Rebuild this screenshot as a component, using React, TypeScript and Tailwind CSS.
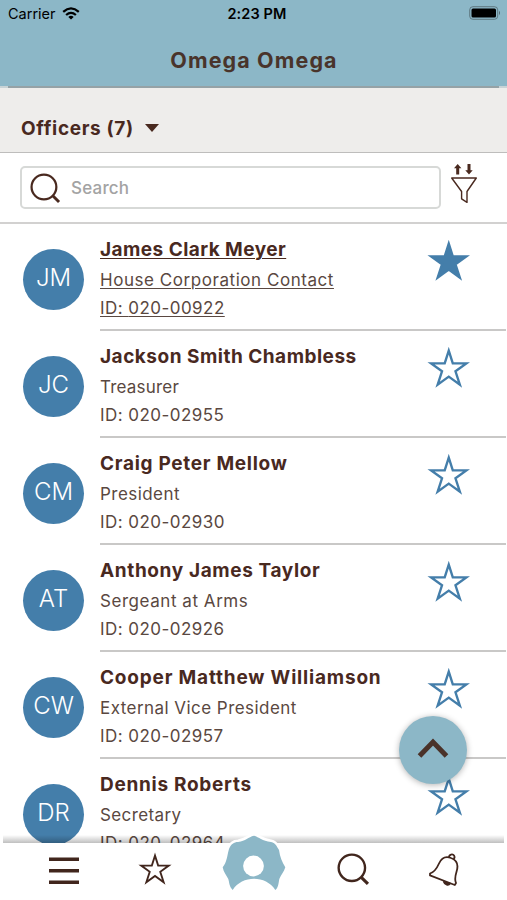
import clsx from 'clsx'

interface Officer {
  initials: string
  name: string
  role: string
  id: string
  starred?: boolean
  nameTracking: string
  roleTracking: string
}

const officers: Officer[] = [
  {
    initials: 'JM',
    name: 'James Clark Meyer',
    role: 'House Corporation Contact',
    id: '020-00922',
    starred: true,
    nameTracking: 'tracking-[0.45px]',
    roleTracking: 'tracking-[0.55px]',
  },
  {
    initials: 'JC',
    name: 'Jackson Smith Chambless',
    role: 'Treasurer',
    id: '020-02955',
    nameTracking: 'tracking-[0.5px]',
    roleTracking: 'tracking-[0.2px]',
  },
  {
    initials: 'CM',
    name: 'Craig Peter Mellow',
    role: 'President',
    id: '020-02930',
    nameTracking: 'tracking-[0.7px]',
    roleTracking: 'tracking-[0.45px]',
  },
  {
    initials: 'AT',
    name: 'Anthony James Taylor',
    role: 'Sergeant at Arms',
    id: '020-02926',
    nameTracking: 'tracking-[0.62px]',
    roleTracking: 'tracking-[0.55px]',
  },
  {
    initials: 'CW',
    name: 'Cooper Matthew Williamson',
    role: 'External Vice President',
    id: '020-02957',
    nameTracking: 'tracking-[0.81px]',
    roleTracking: 'tracking-[0.45px]',
  },
  {
    initials: 'DR',
    name: 'Dennis Roberts',
    role: 'Secretary',
    id: '020-02964',
    nameTracking: 'tracking-[0.72px]',
    roleTracking: 'tracking-[0.4px]',
  },
]

function Star({ filled, className }: { filled?: boolean; className?: string }) {
  return (
    <svg viewBox="0 0 42 42" className={className} fill={filled ? 'currentColor' : 'none'} stroke="currentColor">
      <path
        d="M21 4.5 L24.9 16.8 H38 L27.5 24.4 L31.7 37.4 L21 29.6 L10.3 37.4 L14.5 24.4 L4 16.8 H17.1 Z"
        strokeWidth="2.3"
      />
    </svg>
  )
}

function SearchIcon({ className }: { className?: string }) {
  return (
    <svg viewBox="0 0 32 32" className={className} fill="none" stroke="currentColor">
      <circle cx="14.4" cy="14.4" r="12.8" strokeWidth="2.3" />
      <path d="M23.8 23.8 L30 30" strokeWidth="3" />
    </svg>
  )
}

function StatusBar() {
  return (
    <div className="grid h-[28px] grid-cols-3 items-center pr-[6px] pl-2 text-black">
      <div className="flex items-center gap-[6px]">
        <span className="text-[14.5px] leading-none">Carrier</span>
        <svg viewBox="0 0 18 13" className="-mt-[1px] h-[13px] w-[18px]" fill="none" stroke="currentColor" strokeWidth="2.3">
          <path d="M1.2 4.8 Q9 -2 16.8 4.8" />
          <path d="M4.1 8 Q9 3.8 13.9 8" />
          <path d="M9 12.6 L6.3 9.9 Q9 7.8 11.7 9.9 Z" fill="currentColor" stroke="none" />
        </svg>
      </div>
      <span className="pl-[5px] text-center text-[14.5px] leading-none font-semibold tracking-[0.1px]">2:23 PM</span>
      <svg viewBox="0 0 32 14" className="-mt-[2px] h-[14px] w-8 justify-self-end">
        <rect x="0.7" y="0.7" width="28" height="12.6" rx="3.2" fill="none" stroke="#53686f" strokeWidth="0.8" />
        <rect x="2.5" y="2.5" width="24.5" height="9" rx="1.5" fill="#000" />
        <path d="M30 4.8 Q32 7 30 9.2 Z" fill="#53686f" />
      </svg>
    </div>
  )
}

function OfficerRow({ officer }: { officer: Officer }) {
  const underline = officer.starred && 'underline decoration-[1.3px] underline-offset-[2px]'
  return (
    <li className="flex h-[107px] shrink-0 pl-[23px]">
      <div className="mt-[24.5px] grid h-[61px] w-[61px] shrink-0 place-items-center rounded-full bg-[#447eaa] pb-[2px] text-[24px] leading-none font-light text-white">
        {officer.initials}
      </div>
      <div className="mr-[1px] ml-4 flex flex-1 justify-between border-b-2 border-[#c9c8c7]">
        <div className="flex flex-col items-start whitespace-nowrap">
          <span className={clsx('mt-[12px] text-[19px] leading-[28px] font-bold text-[#49291f]', officer.nameTracking, underline)}>
            {officer.name}
          </span>
          <span className={clsx('mt-[2px] text-[17px] leading-[28px] text-[#5a4841]', officer.roleTracking, underline)}>
            {officer.role}
          </span>
          <span className={clsx('text-[17px] leading-[28px] tracking-[0.45px] text-[#5a4841]', underline)}>
            ID: {officer.id}
          </span>
        </div>
        <Star filled={officer.starred} className="mt-[15px] mr-[36px] h-[43.5px] w-[43.5px] text-[#447eaa]" />
      </div>
    </li>
  )
}

function NavBar() {
  return (
    <nav className="relative h-[57px] shrink-0 bg-white text-[#41261d]">
      <div className="absolute inset-x-[3px] -top-[8px] h-[8px] bg-linear-to-t from-black/25 to-transparent" />
      <div className="relative flex h-full items-start">
        <svg viewBox="0 0 30 28" className="mt-[14px] ml-[49px] h-[28px] w-[30px]" stroke="currentColor" strokeWidth="3.6">
          <path d="M0 2.2 H30 M0 13.8 H30 M0 25.2 H30" />
        </svg>
        <Star className="mt-[8.5px] ml-[58.5px] h-[34px] w-[34px]" />
        <svg viewBox="0 0 68 60" className="-mt-[10px] ml-[48.5px] h-[60px] w-[68px]">
          <path
            d="M34 2.7 C39 4 42 8 51 9 C56 10 57 14 59 17 C60 24 62 29 65.3 34.3 C64 39 61 42 59.3 46 C58.5 51 58 55 55.3 57 C46 42 22 42 12.7 57 C9 53 9.5 50 8.3 46 C6 42 3.5 39 2.7 34.3 C7 29 7 23 9 16 C11 11 14 9 18 9 C26 8 28 4 34 2.7 Z"
            fill="#8cb7c7"
            stroke="#fff"
            strokeWidth="5"
            paintOrder="stroke"
          />
          <circle cx="33.5" cy="33" r="10.4" fill="#fff" />
        </svg>
        <SearchIcon className="mt-[10px] ml-[49px] h-[33px] w-[33px]" />
        <svg viewBox="0 0 32 34" className="mt-[10px] ml-[58px] h-[34px] w-8" fill="none" stroke="currentColor" strokeWidth="1.8" strokeLinejoin="round">
          <path d="M2 20.5 C7 19 9 15 11 10.5 C13.5 5 18 3 23 5 C29 7.2 30.5 12 28.7 18 C27 23.5 26.5 27 28 30 L26.8 32 L2 22.4 Z" />
          <path d="M21 4.2 C21 1.4 24.8 0.4 26.2 2.8 C26.8 4 26.4 5.4 25.4 6" />
          <path d="M15.8 28.8 C16.8 32 20.6 32.8 22 30.6 Z" fill="currentColor" />
        </svg>
      </div>
    </nav>
  )
}

export default function App() {
  return (
    <div className="relative flex h-screen w-full flex-col overflow-hidden bg-white font-['Inter',sans-serif]">
      <header className="h-[86px] shrink-0 bg-[#8cb7c7]">
        <StatusBar />
        <h1 className="mt-[17px] pl-[1px] text-center text-[21.5px] leading-[30px] font-bold tracking-[1.1px] text-[#49342b]">
          Omega Omega
        </h1>
      </header>
      <div className="h-[2px] shrink-0 bg-[#c8d3d6] px-2">
        <div className="h-full bg-[#95a2a6]" />
      </div>

      <div className="flex h-[65px] shrink-0 items-center gap-[11px] border-b border-[#bebdbc] bg-[#eeedeb] pt-[15px] pl-[21px] text-[#49291f]">
        <span className="pt-[1px] text-[19px] leading-none font-bold tracking-[0.65px]">Officers (7)</span>
        <svg viewBox="0 0 14 8" className="h-2 w-[14px]" fill="currentColor">
          <path d="M0 0 H14 L7 8 Z" />
        </svg>
      </div>

      <div className="flex h-[71px] shrink-0 border-b-2 border-[#d2d1d0] pl-5">
        <div className="mt-[13px] flex h-[43px] w-[421px] items-center rounded-[5px] border-2 border-[#d7d9d7] pl-[7.5px]">
          <SearchIcon className="mt-[2px] h-[31px] w-[31px] text-[#49291f]" />
          <span className="ml-[10.5px] pt-[1px] text-[17px] leading-none font-medium tracking-[0.2px] text-[#a3a3a3]">Search</span>
        </div>
        <svg viewBox="0 0 28 42" className="mt-[10px] ml-[9px] h-[42px] w-7 text-[#49291f]">
          <path
            d="M7.7 1 L11.4 5.2 H9.2 V11.5 H6.2 V5.2 H4 Z M19 11.5 L15.3 7.3 H17.5 V1 H20.5 V7.3 H22.7 Z"
            fill="currentColor"
          />
          <path
            d="M1.7 15 H26.3 L17 28.5 V39.4 L11.6 35.8 V28.5 Z"
            fill="none"
            stroke="currentColor"
            strokeWidth="1.4"
            strokeLinejoin="round"
          />
        </svg>
      </div>

      <ul className="flex min-h-0 flex-1 flex-col overflow-hidden">
        {officers.map((officer) => (
          <OfficerRow key={officer.id} officer={officer} />
        ))}
      </ul>

      <NavBar />

      <button className="absolute top-[716px] left-[399px] grid h-[68px] w-[68px] place-items-center rounded-full bg-[#8cb7c7] pb-[4px] shadow-[0_1px_6px_rgba(0,0,0,0.3)]">
        <svg viewBox="0 0 32 20" className="h-5 w-8" fill="none" stroke="#4a3229" strokeWidth="5">
          <path d="M2.5 18 L16 4 L29.5 18" />
        </svg>
      </button>
    </div>
  )
}
